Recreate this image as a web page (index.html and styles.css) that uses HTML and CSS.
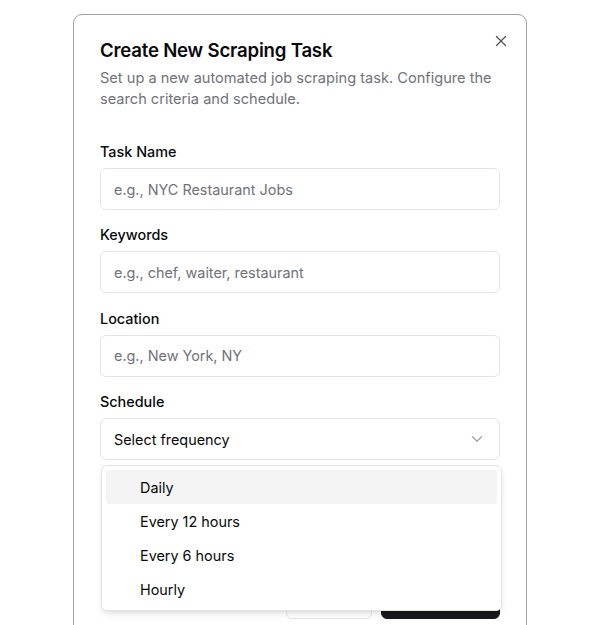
FILE: index.html
```html
<!DOCTYPE html>
<html lang="en">
<head>
<meta charset="utf-8">
<title>Create New Scraping Task</title>
<link rel="stylesheet" href="styles.css">
</head>
<body>
<div class="stage">
  <div class="dialog" role="dialog">
    <button class="close" aria-label="Close">
      <svg viewBox="0 0 12 12" width="12" height="12"><path d="M1.5 1.5 10.5 10.5M10.5 1.5 1.5 10.5" fill="none" stroke="currentColor" stroke-width="1.3" stroke-linecap="round"/></svg>
    </button>
    <div class="header">
      <h2 class="title">Create New Scraping Task</h2>
      <p class="desc">Set up a new automated job scraping task. Configure the search criteria and schedule.</p>
    </div>
    <div class="form">
      <div class="field">
        <label class="label">Task Name</label>
        <div class="input placeholder">e.g., NYC Restaurant Jobs</div>
      </div>
      <div class="field">
        <label class="label">Keywords</label>
        <div class="input placeholder">e.g., chef, waiter, restaurant</div>
      </div>
      <div class="field">
        <label class="label">Location</label>
        <div class="input placeholder">e.g., New York, NY</div>
      </div>
      <div class="field select-field">
        <label class="label">Schedule</label>
        <div class="input select">
          <span>Select frequency</span>
          <svg class="chev" viewBox="0 0 12 8" width="12" height="8"><path d="M1.5 1.8 6 6.2 10.5 1.8" fill="none" stroke="currentColor" stroke-width="1.3" stroke-linecap="round" stroke-linejoin="round"/></svg>
        </div>
        <div class="menu" role="listbox">
          <div class="item active">Daily</div>
          <div class="item">Every 12 hours</div>
          <div class="item">Every 6 hours</div>
          <div class="item">Hourly</div>
        </div>
      </div>
    </div>
    <div class="footer">
      <button class="btn outline">Cancel</button>
      <button class="btn primary">Create Task</button>
    </div>
  </div>
</div>
</body>
</html>
```

FILE: styles.css
```css
* { box-sizing: border-box; }
html, body { margin: 0; padding: 0; background: #fff; }
body {
  font-family: Inter, "Liberation Sans", sans-serif;
  color: #09090b;
  height: 625px;
  overflow: hidden;
}
.stage {
  display: flex;
  justify-content: center;
  padding-top: 14px;
}
.dialog {
  position: relative;
  width: 454px;
  border: 1px solid #a1a1aa;
  border-radius: 9px;
  background: #fff;
  padding: 23px 26px 24px;
}
.close {
  position: absolute;
  top: 20px;
  right: 19px;
  width: 12px;
  height: 12px;
  padding: 0;
  border: 0;
  background: none;
  color: #52525b;
  display: flex;
}
.header { display: flex; flex-direction: column; gap: 6px; }
.title {
  margin: 0;
  font-size: 18.6px;
  line-height: 24px;
  font-weight: 600;
  letter-spacing: -0.2px;
}
.desc {
  margin: 0;
  font-size: 14.6px;
  line-height: 21px;
  color: #71717a;
}
.form {
  margin-top: 35px;
  display: flex;
  flex-direction: column;
  gap: 18.4px;
}
.field { display: flex; flex-direction: column; gap: 9px; }
.select-field { position: relative; }
.label {
  font-size: 14.4px;
  line-height: 14px;
  font-weight: 500;
}
.input {
  height: 42px;
  border: 1px solid #e4e4e7;
  border-radius: 6px;
  padding: 0 13px;
  font-size: 14.4px;
  display: flex;
  align-items: center;
}
.placeholder { color: #71717a; }
.select { justify-content: space-between; color: #09090b; padding-right: 16px; }
.chev { color: #a1a1aa; }
.menu {
  position: absolute;
  top: 100%;
  left: 1px;
  width: 401px;
  margin-top: 5px;
  background: #fff;
  border: 1px solid #e4e4e7;
  border-radius: 6px;
  box-shadow: 0 4px 8px -2px rgba(0,0,0,0.12), 0 2px 4px -2px rgba(0,0,0,0.08);
  padding: 4px;
  z-index: 10;
}
.item {
  height: 34px;
  display: flex;
  align-items: center;
  padding-left: 34px;
  font-size: 14.4px;
  border-radius: 3px;
}
.item.active { background: #f4f4f5; }
.footer {
  margin-top: 119px;
  display: flex;
  justify-content: flex-end;
  gap: 9px;
}
.btn {
  height: 40px;
  border-radius: 6px;
  font-family: inherit;
  font-size: 14px;
  font-weight: 500;
  padding: 0 16px;
}
.outline { background: #fff; border: 1px solid #e4e4e7; color: #09090b; width: 86px; }
.primary { background: #18181b; border: 1px solid #18181b; color: #fafafa; width: 119px; }
```
